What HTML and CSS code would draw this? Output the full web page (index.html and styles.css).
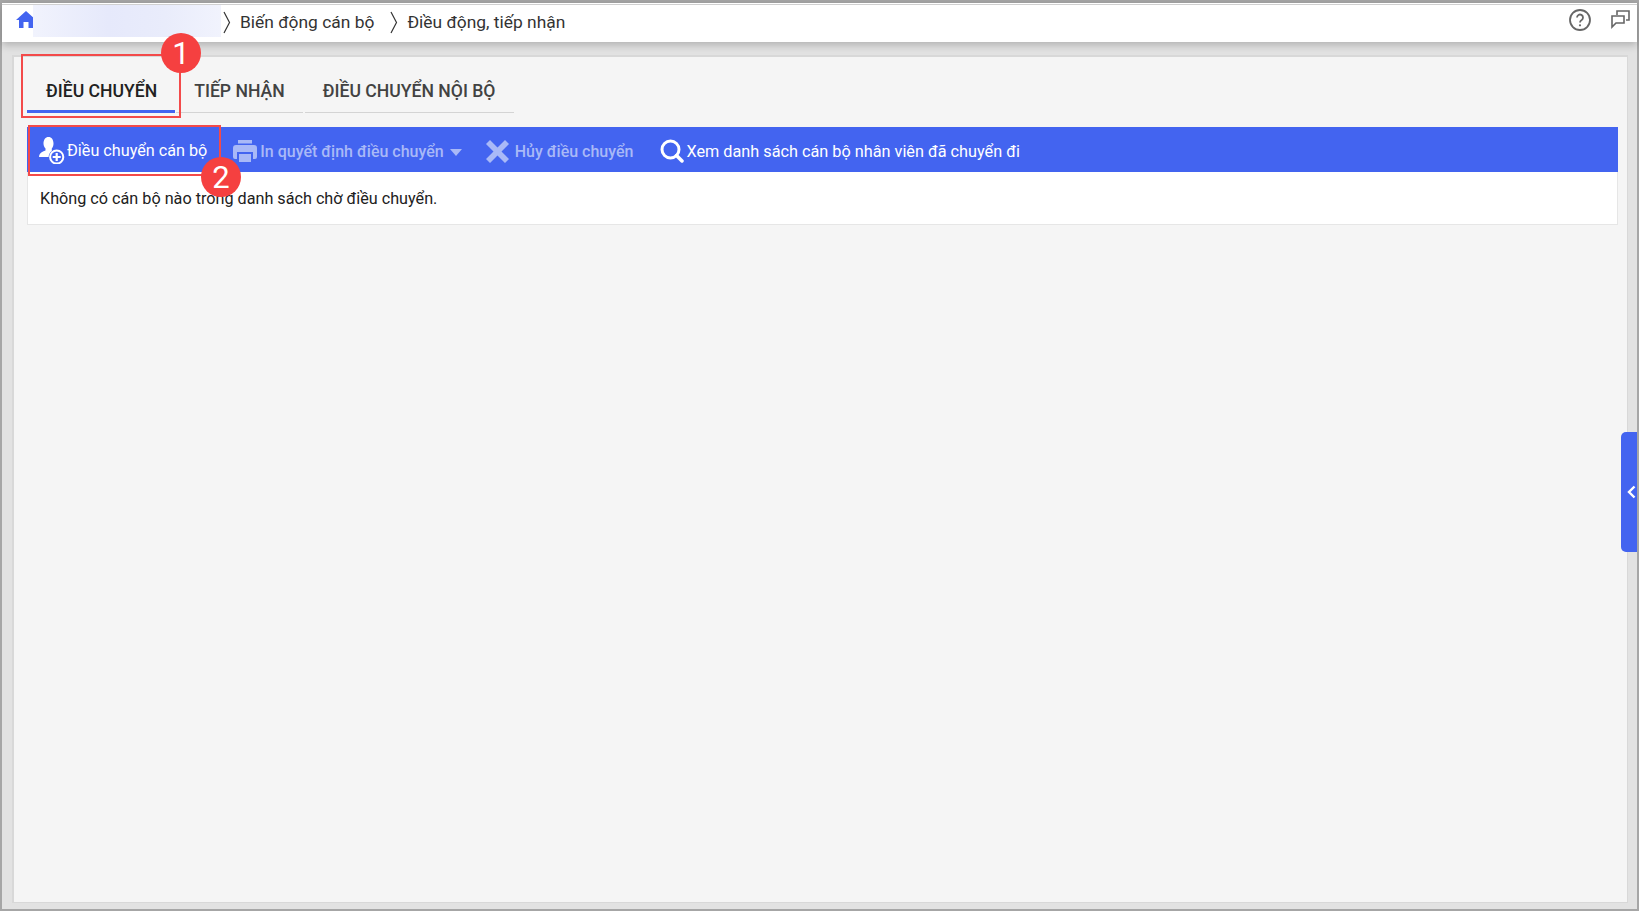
FILE: index.html
```html
<!DOCTYPE html>
<html lang="vi">
<head>
<meta charset="utf-8">
<title>Điều động, tiếp nhận</title>
<link rel="stylesheet" href="styles.css">
</head>
<body>
<div class="frame">
  <header class="topbar">
    <svg class="home" viewBox="0 0 20 17" width="20" height="17"><path d="M10 0l10 9h-3v8h-4.500v-6h-5v6H3V9H0z" fill="#4364f0"/></svg>
    <div class="blur"></div>
    <svg class="crumb-sep" viewBox="0 0 8 23" width="8" height="23"><path d="M1 1l5.500 10.500L1 22" fill="none" stroke="#333" stroke-width="1.200"/></svg>
    <span class="crumb first">Biến động cán bộ</span>
    <svg class="crumb-sep second" viewBox="0 0 8 23" width="8" height="23"><path d="M1 1l5.500 10.500L1 22" fill="none" stroke="#333" stroke-width="1.200"/></svg>
    <span class="crumb">Điều động, tiếp nhận</span>
    <div class="top-actions">
      <svg viewBox="0 0 24 24" width="24" height="24"><circle cx="12" cy="12" r="10" fill="none" stroke="#666" stroke-width="1.800"/><path d="M9 9.500a3 3 0 1 1 4.700 2.500c-1.100.7-1.700 1.300-1.700 2.500" fill="none" stroke="#666" stroke-width="1.800"/><circle cx="12" cy="17.300" r="1.100" fill="#666"/></svg>
      <svg class="chat" viewBox="0 0 20 20" width="20" height="20"><path d="M7 6V2h12v9h-3M2 7h12v7H6l-4 4z" fill="none" stroke="#666" stroke-width="1.600"/></svg>
    </div>
  </header>
  <main class="panel">
    <nav class="tabs">
      <a class="tab active">ĐIỀU CHUYỂN</a>
      <a class="tab second-tab">TIẾP NHẬN</a>
      <a class="tab third-tab">ĐIỀU CHUYỂN NỘI BỘ</a>
    </nav>
    <section class="card">
      <div class="toolbar">
        <button class="tool first-tool">
          <svg viewBox="0 0 27 27" width="27" height="27"><path d="M9.500 0c3 0 5 2.700 5 6.500 0 2-.6 3.800-1.700 5V14c-1.800 1.200-3 3.300-3.200 6H0c0-3 1.800-4.700 4.500-5.800l2-.8v-1.900C5.300 10.300 4.500 8.500 4.500 6.500 4.500 2.700 6.500 0 9.500 0z" fill="#fff"/><circle cx="17.700" cy="20" r="6.600" fill="#4364f0" stroke="#fff" stroke-width="2"/><path d="M17.700 16v8M13.700 20h8" stroke="#fff" stroke-width="2.200"/></svg>
          <span>Điều chuyển cán bộ</span>
        </button>
        <button class="tool disabled print">
          <svg viewBox="0 0 24 22" width="24" height="22"><path d="M5 0h14v3.500H5zM3 5h18a3 3 0 0 1 3 3v9a2 2 0 0 1-2 2h-2v-7H4v7H2a2 2 0 0 1-2-2V8a3 3 0 0 1 3-3zM6 14h12v8H6z" fill="#a9b9f7"/></svg>
          <span>In quyết định điều chuyển</span>
          <svg class="caret" viewBox="0 0 12 7" width="12" height="7"><path d="M0 0h12L6 7z" fill="#a9b9f7"/></svg>
        </button>
        <button class="tool disabled cancel">
          <svg viewBox="0 0 23 23" width="23" height="23"><path d="M4 0l7.500 7.500L19 0l4 4-7.500 7.500L23 19l-4 4-7.500-7.500L4 23l-4-4 7.500-7.500L0 4z" fill="#a9b9f7"/></svg>
          <span>Hủy điều chuyển</span>
        </button>
        <button class="tool view">
          <svg viewBox="0 0 24 24" width="24" height="24"><circle cx="10.500" cy="10.500" r="8.500" fill="none" stroke="#fff" stroke-width="3"/><path d="M16.500 16.500l5.500 5.500" stroke="#fff" stroke-width="3.500" stroke-linecap="round"/></svg>
          <span>Xem danh sách cán bộ nhân viên đã chuyển đi</span>
        </button>
      </div>
      <p class="empty">Không có cán bộ nào trong danh sách chờ điều chuyển.</p>
    </section>
  </main>
  <div class="mark box-one"></div>
  <div class="mark box-two"></div>
  <div class="badge badge-one">1</div>
  <div class="badge badge-two">2</div>
  <button class="side-tab"><svg viewBox="0 0 9 14" width="9" height="14"><path d="M7.500 1.500 2 7l5.500 5.500" fill="none" stroke="#fff" stroke-width="2.400"/></svg></button>
</div>
</body>
</html>
```

FILE: styles.css
```css
* { box-sizing: border-box; }
html, body { margin: 0; height: 100%; }
body { background: #fff; font-family: Roboto, "Noto Sans", sans-serif; overflow: hidden; }
.frame {
  position: relative;
  width: 1639px;
  height: 911px;
  display: flex;
  flex-direction: column;
  background: #e2e2e2;
  border: 2px solid #a6a6a6;
  border-top-width: 3px;
  padding-bottom: 6px;
}
.topbar {
  height: 39px;
  flex: none;
  display: flex;
  align-items: center;
  padding: 1px 0 2px 14px;
  background: linear-gradient(#fff 1px, #d0d0d0 1px, #d0d0d0 2px, #fff 2px);
  box-shadow: 0 3px 8px rgba(0, 0, 0, .22);
  position: relative;
  z-index: 1;
}
.home { flex: none; margin-bottom: 5px; }
.blur {
  width: 188px;
  height: 32px;
  margin: 0 0 2px -3px;
  flex: none;
  background: linear-gradient(90deg, #f1f3fd, #e6e9fb 40%, #e9ecfb 70%, #f1f3fd);
}
.crumb-sep { flex: none; margin-left: 2px; }
.crumb-sep.second { margin-left: 16px; }
.crumb { font-size: 17.400px; font-weight: 400; color: #333; margin-left: 9px; white-space: nowrap; }
.top-actions { margin-left: auto; margin-right: 7px; padding-bottom: 5px; display: flex; align-items: center; gap: 18px; }
.chat { margin-bottom: 1px; }
.panel {
  flex: 1;
  margin: 13px 9px 0 10px;
  background: #f5f5f5;
  border: 2px solid #d8d8d8;
  border-width: 2px 1px 1px 2px;
  padding: 0 9px 0 13px;
}
.tabs { display: flex; height: 56px; }
.tab {
  display: flex;
  align-items: flex-end;
  padding: 0 18px 11px;
  height: 56px;
  font-size: 17.600px;
  font-weight: 500;
  color: #424242;
  white-space: nowrap;
  border-bottom: 1px solid #d4d4d4;
}
.second-tab { margin-left: 1px; }
.third-tab { margin-left: 2px; padding-right: 19px; }
.tab.active { color: #212121; border-bottom: 3px solid #4364f0; padding: 0 18px 9px 19px; }
.card { margin-top: 14px; background: #fff; border: 1px solid #e6e6e6; border-top: 0; }
.toolbar { display: flex; align-items: center; height: 45px; background: #4364f0; margin: 0 -1px; padding: 3px 0 0 12px; }
.tool {
  display: flex;
  align-items: center;
  padding: 0;
  background: none;
  border: 0;
  color: #fff;
  font: 500 16px Roboto, sans-serif;
  white-space: nowrap;
}
.tool.disabled { color: #a9b9f7; }
.first-tool { margin-bottom: 2px; font-weight: 400; font-size: 16.200px; }
.first-tool span { margin-left: 1px; }
.print { margin-left: 26px; }
.print span { margin-left: 3px; }
.caret { margin-left: 6px; margin-top: 2px; }
.cancel { margin-left: 24px; }
.cancel span { margin-left: 6px; }
.view { margin-left: 27px; font-weight: 400; font-size: 16.250px; }
.view span { margin-left: 2px; }
.empty { margin: 0; padding: 17px 12px 16px; font-size: 16.220px; line-height: 19px; color: #212121; }
.mark { position: absolute; z-index: 2; border: 2px solid #f34a4a; }
.box-one { left: 19px; top: 51px; width: 160px; height: 64px; }
.box-two { left: 26px; top: 122px; width: 193px; height: 51px; }
.badge {
  position: absolute;
  z-index: 3;
  width: 40px;
  height: 40px;
  border-radius: 50%;
  background: #f54040;
  color: #fff;
  display: flex;
  align-items: center;
  justify-content: center;
  font: 400 31px Roboto, sans-serif;
}
.badge-one { left: 159px; top: 30px; }
.badge-two { left: 199px; top: 154px; }
.side-tab {
  position: absolute;
  left: 1619px;
  top: 429px;
  width: 16px;
  height: 120px;
  padding: 0 0 0 6px;
  display: flex;
  align-items: center;
  background: #4364f0;
  border: 0;
  border-radius: 5px 0 0 5px;
}
```
